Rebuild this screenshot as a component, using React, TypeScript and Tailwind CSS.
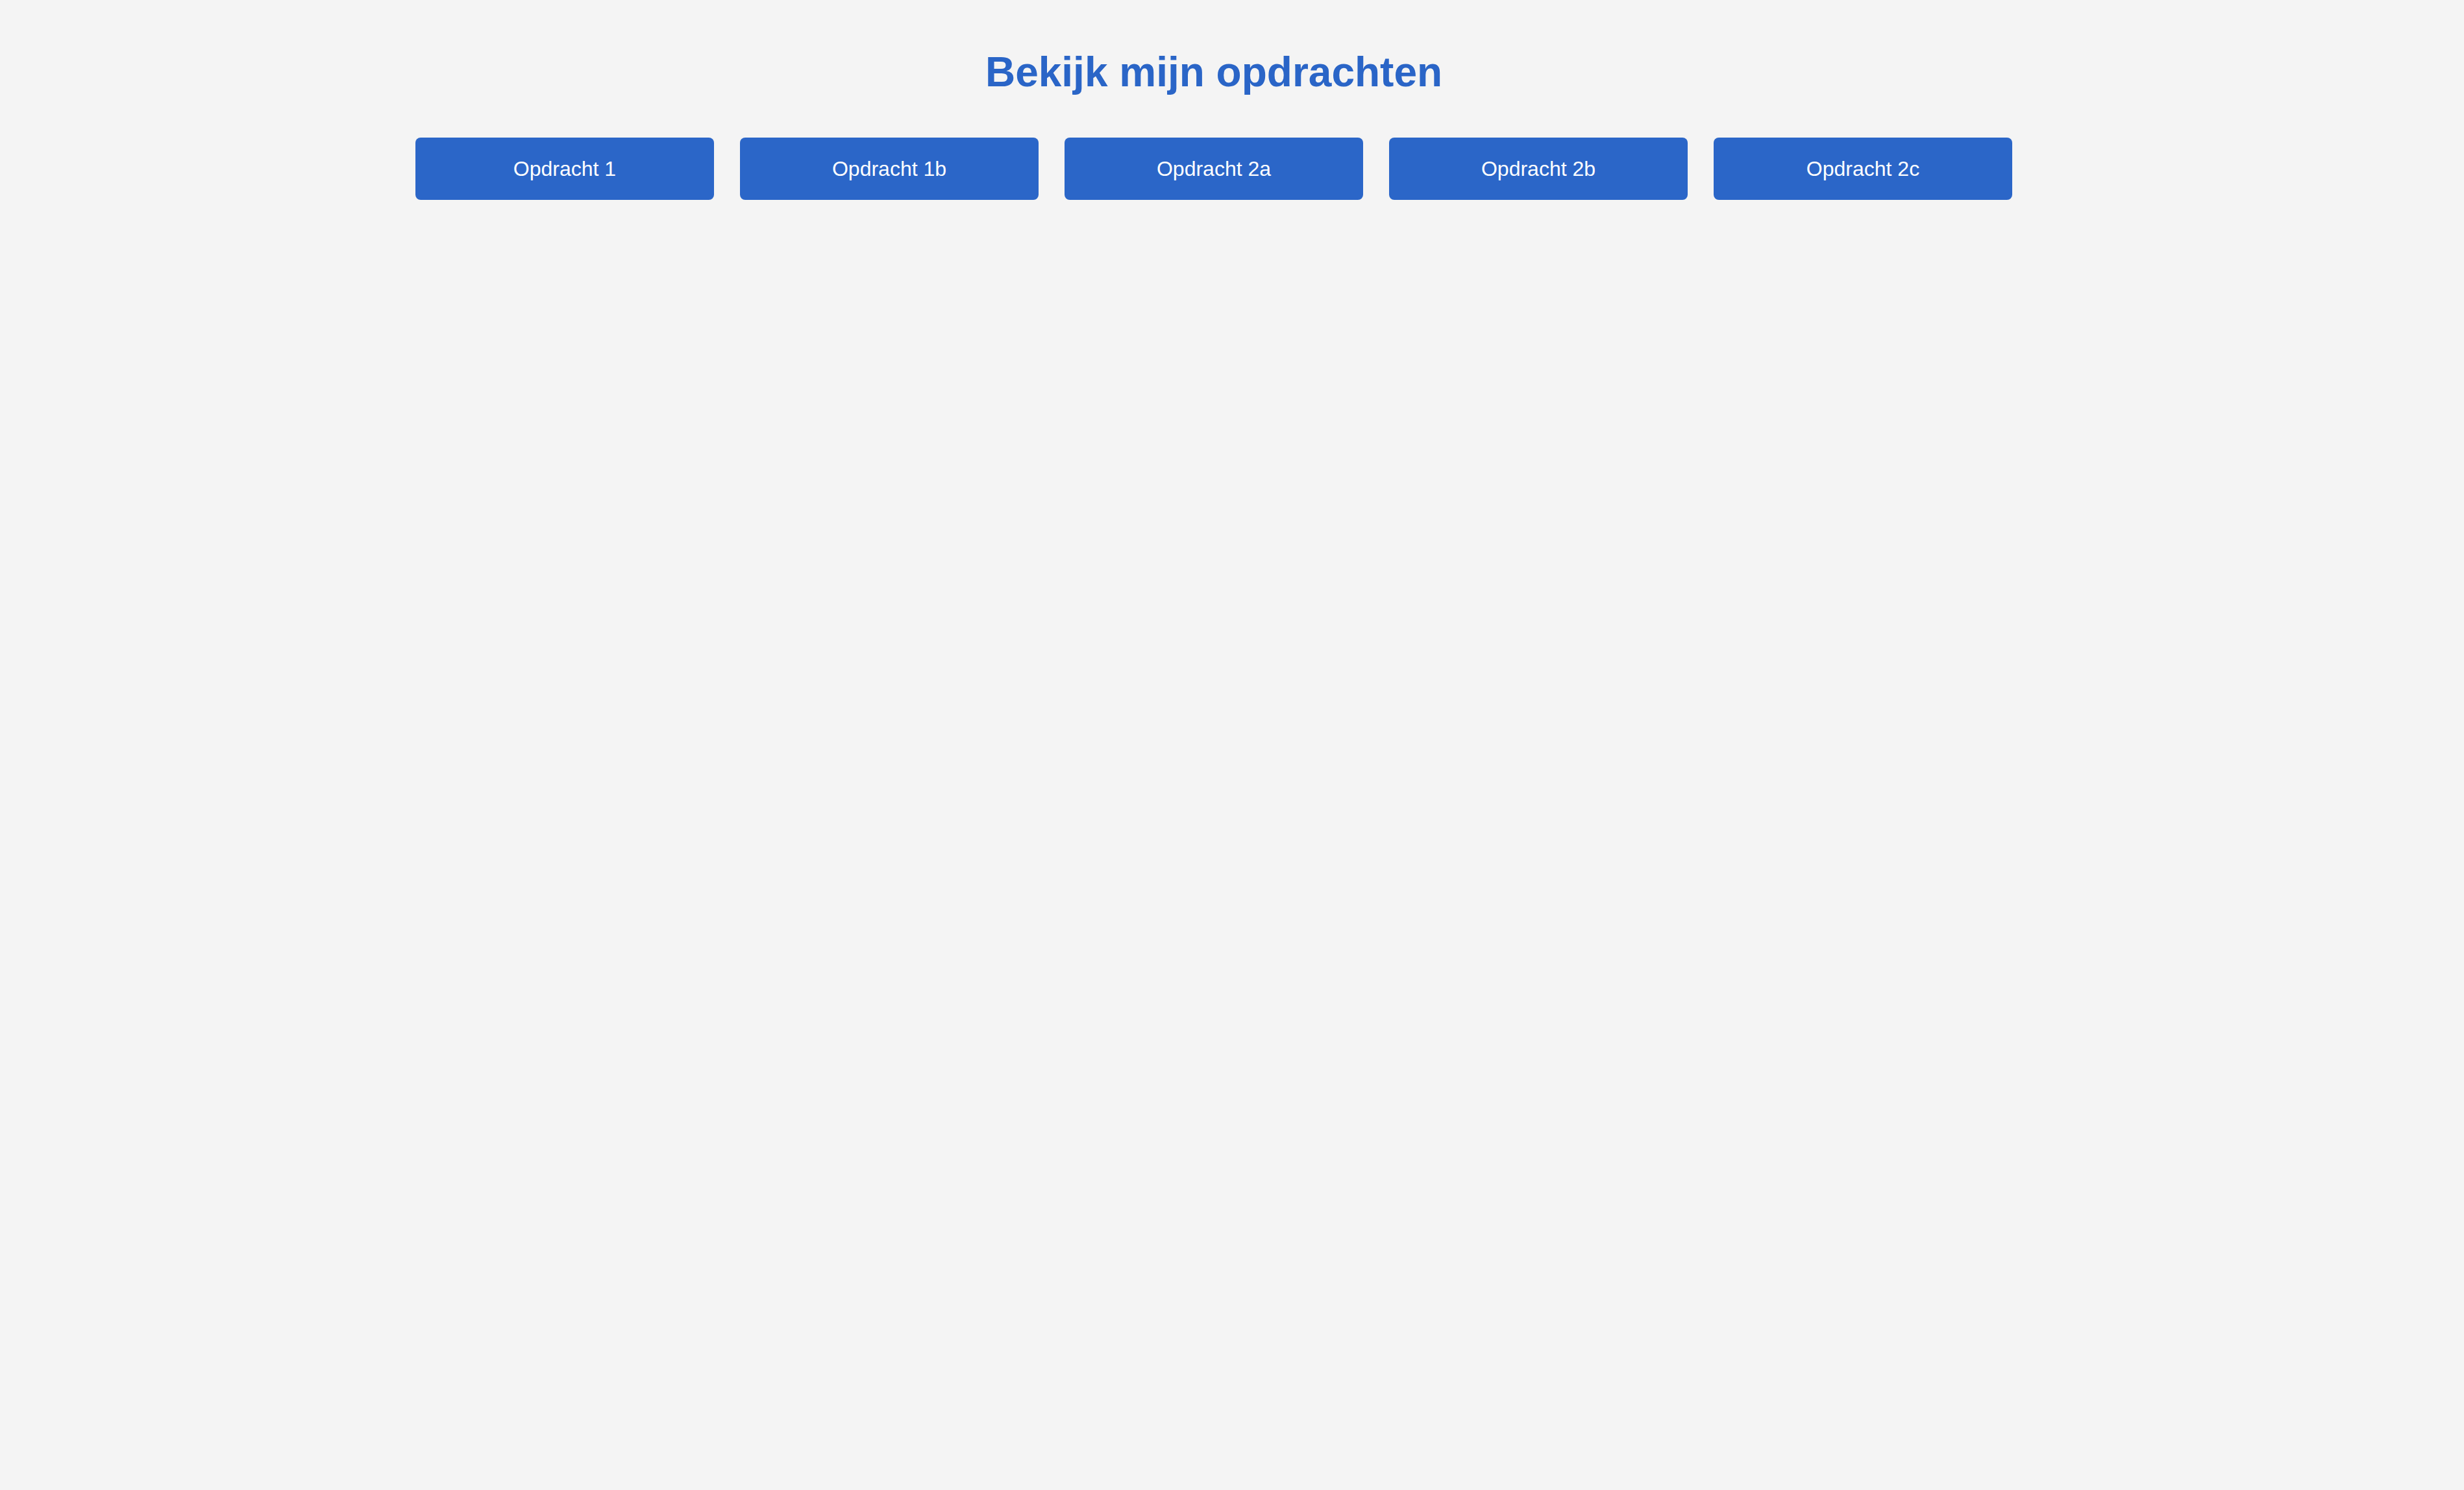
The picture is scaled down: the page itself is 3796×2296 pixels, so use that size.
import React from "react";

const opdrachten = ["Opdracht 1", "Opdracht 1b", "Opdracht 2a", "Opdracht 2b", "Opdracht 2c"];

export default function App() {
  return (
    <div
      className="min-h-screen w-full bg-[#f4f4f4]"
      style={{ fontFamily: '"Liberation Sans", Arial, sans-serif' }}
    >
      <div className="w-[3740px] flex flex-col items-center pt-[66px]">
        {/* Title */}
        <h1 className="text-[64px] leading-[90px] font-bold text-[#2a65c7]">
          Bekijk mijn opdrachten
        </h1>

        {/* Buttons */}
        <div className="mt-[56px] grid grid-cols-5 gap-[40px] w-[2460px]">
          {opdrachten.map((naam) => (
            <button
              key={naam}
              className="h-[96px] rounded-[8px] bg-[#2b66c8] text-white text-[32px]"
            >
              {naam}
            </button>
          ))}
        </div>
      </div>
    </div>
  );
}
